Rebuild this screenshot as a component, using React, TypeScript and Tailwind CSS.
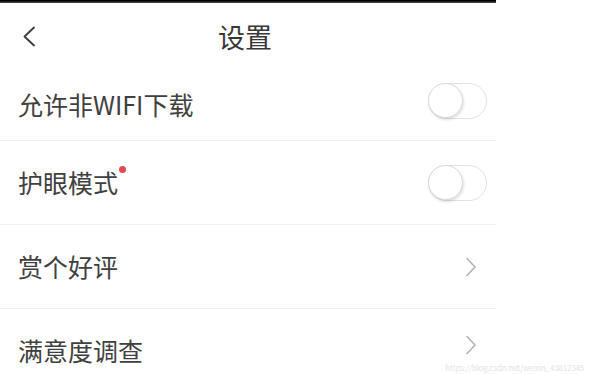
import React from 'react';

const font = { fontFamily: '"Noto Sans CJK SC", "Noto Sans", sans-serif' };

function Toggle() {
  return (
    <div className="relative w-[59px] h-[36px] rounded-full border-[1.5px] border-[#e2e2e2] bg-white">
      <div className="absolute left-[-1px] top-[-1px] w-[35px] h-[35px] rounded-full border-[1.5px] border-[#dadada] bg-white shadow-[1px_2px_3px_rgba(0,0,0,0.12)]" />
    </div>
  );
}

function Chevron() {
  return (
    <svg width="12" height="20" viewBox="0 0 12 20" fill="none">
      <path d="M2 1.5 L10 10 L2 18.5" stroke="#b4b4b4" strokeWidth="1.6" strokeLinecap="round" strokeLinejoin="round" />
    </svg>
  );
}

function Row({ label, dot, right, h, top }: { label: string; dot?: boolean; right: React.ReactNode; h: string; top?: boolean }) {
  return (
    <div className={`${h} flex items-center justify-between pl-[18px] pr-[9px] ${top ? '' : 'border-t border-[#f1f1f1]'}`}>
      <div className="relative text-[25px] leading-none text-[#404040]">
        {label}
        {dot && <span className="absolute right-[-8px] top-[-4px] w-[7px] h-[7px] rounded-full bg-[#df4a4f]" />}
      </div>
      {right}
    </div>
  );
}

export default function App() {
  return (
    <div className="w-[592px] h-[374px] bg-white overflow-hidden relative" style={font}>
      <div className="w-[496px]">
        <div className="h-[3px] bg-gradient-to-b from-black to-[#555]" />
        <div className="h-[66px] flex items-center pl-[22px]">
          <svg width="14" height="21" viewBox="0 0 14 21" fill="none">
            <path d="M12 1.5 L2.5 10.5 L12 19.5" stroke="#3b3b3b" strokeWidth="1.8" strokeLinecap="round" strokeLinejoin="round" />
          </svg>
          <span className="ml-[182px] text-[27px] leading-none text-[#383838]">设置</span>
        </div>
        <Row top h="h-[71px]" label="允许非WIFI下载" right={<div className="mb-[8px]"><Toggle /></div>} />
        <Row h="h-[84px]" label="护眼模式" dot right={<Toggle />} />
        <Row h="h-[84px]" label="赏个好评" right={<div className="mr-[10px]"><Chevron /></div>} />
        <Row h="h-[84px]" label="满意度调查" right={<div className="mr-[10px] mb-[12px]"><Chevron /></div>} />
      </div>
      <div className="absolute right-[8px] bottom-[2px] text-[8px] leading-none text-[#e4e4e4] tracking-tight">
        https://blog.csdn.net/weixin_43812345
      </div>
    </div>
  );
}
